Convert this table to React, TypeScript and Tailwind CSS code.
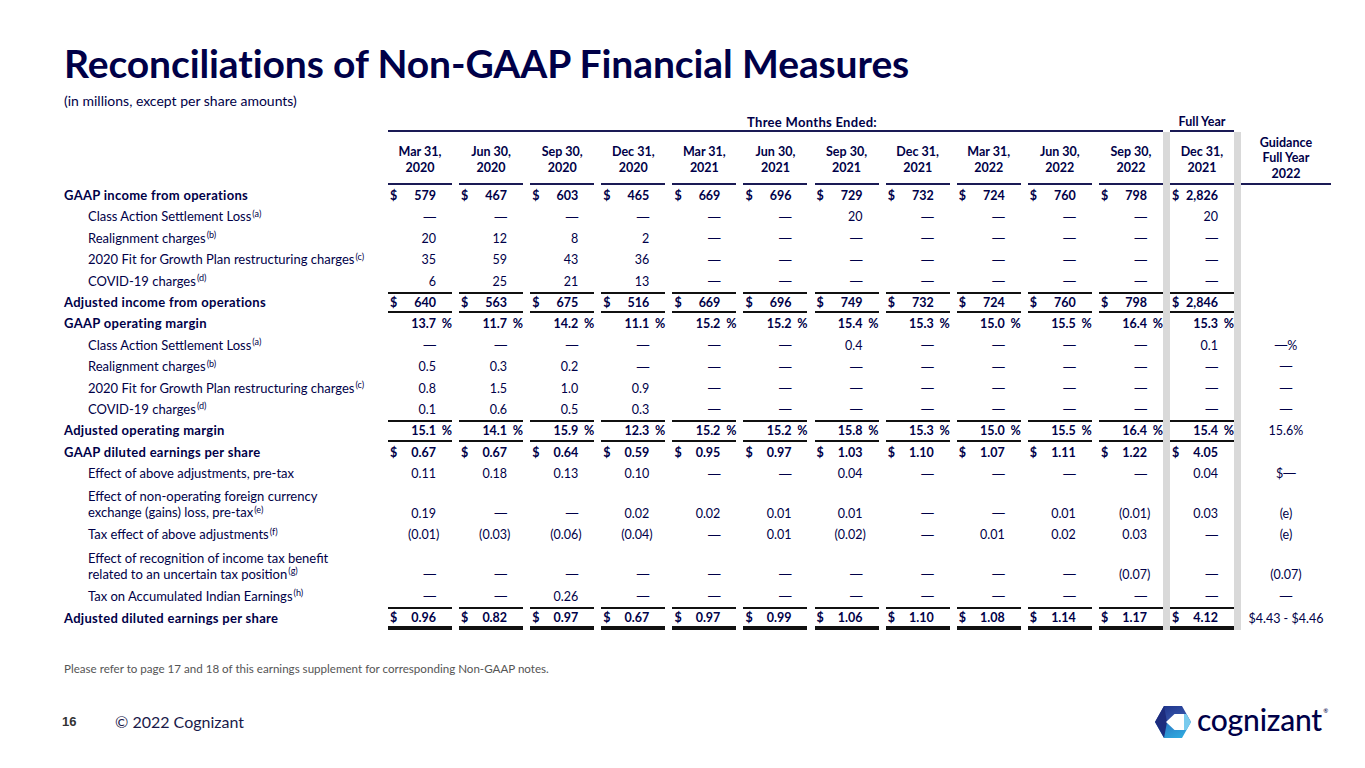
import React from "react";

type Row = {
  label: React.ReactNode;
  bold?: boolean;
  two?: boolean;
  dollar?: boolean;
  pct?: boolean;
  line?: "box" | "double";
  q: string[];
  fy: string;
  g?: string;
};

const D = "—";

const quarters = [
  ["Mar 31,", "2020"],
  ["Jun 30,", "2020"],
  ["Sep 30,", "2020"],
  ["Dec 31,", "2020"],
  ["Mar 31,", "2021"],
  ["Jun 30,", "2021"],
  ["Sep 30,", "2021"],
  ["Dec 31,", "2021"],
  ["Mar 31,", "2022"],
  ["Jun 30,", "2022"],
  ["Sep 30,", "2022"],
];

const Sup = ({ c }: { c: string }) => <sup className="text-[9px] ml-[1px]">({c})</sup>;

const dashes = (n: number) => Array(n).fill(D);

const rows: Row[] = [
  { label: "GAAP income from operations", bold: true, dollar: true, q: ["579", "467", "603", "465", "669", "696", "729", "732", "724", "760", "798"], fy: "2,826" },
  { label: <>Class Action Settlement Loss<Sup c="a" /></>, q: [...dashes(6), "20", ...dashes(4)], fy: "20" },
  { label: <>Realignment charges<Sup c="b" /></>, q: ["20", "12", "8", "2", ...dashes(7)], fy: D },
  { label: <>2020 Fit for Growth Plan restructuring charges<Sup c="c" /></>, q: ["35", "59", "43", "36", ...dashes(7)], fy: D },
  { label: <>COVID-19 charges<Sup c="d" /></>, q: ["6", "25", "21", "13", ...dashes(7)], fy: D },
  { label: "Adjusted income from operations", bold: true, dollar: true, line: "box", q: ["640", "563", "675", "516", "669", "696", "749", "732", "724", "760", "798"], fy: "2,846" },
  { label: "GAAP operating margin", bold: true, pct: true, q: ["13.7", "11.7", "14.2", "11.1", "15.2", "15.2", "15.4", "15.3", "15.0", "15.5", "16.4"], fy: "15.3" },
  { label: <>Class Action Settlement Loss<Sup c="a" /></>, q: [...dashes(6), "0.4", ...dashes(4)], fy: "0.1", g: "—%" },
  { label: <>Realignment charges<Sup c="b" /></>, q: ["0.5", "0.3", "0.2", ...dashes(8)], fy: D, g: D },
  { label: <>2020 Fit for Growth Plan restructuring charges<Sup c="c" /></>, q: ["0.8", "1.5", "1.0", "0.9", ...dashes(7)], fy: D, g: D },
  { label: <>COVID-19 charges<Sup c="d" /></>, q: ["0.1", "0.6", "0.5", "0.3", ...dashes(7)], fy: D, g: D },
  { label: "Adjusted operating margin", bold: true, pct: true, line: "box", q: ["15.1", "14.1", "15.9", "12.3", "15.2", "15.2", "15.8", "15.3", "15.0", "15.5", "16.4"], fy: "15.4", g: "15.6%" },
  { label: "GAAP diluted earnings per share", bold: true, dollar: true, q: ["0.67", "0.67", "0.64", "0.59", "0.95", "0.97", "1.03", "1.10", "1.07", "1.11", "1.22"], fy: "4.05" },
  { label: "Effect of above adjustments, pre-tax", q: ["0.11", "0.18", "0.13", "0.10", D, D, "0.04", D, D, D, D], fy: "0.04", g: "$—" },
  {
    label: <>Effect of non-operating foreign currency<br />exchange (gains) loss, pre-tax<Sup c="e" /></>,
    two: true,
    q: ["0.19", D, D, "0.02", "0.02", "0.01", "0.01", D, D, "0.01", "(0.01)"],
    fy: "0.03",
    g: "(e)",
  },
  { label: <>Tax effect of above adjustments<Sup c="f" /></>, q: ["(0.01)", "(0.03)", "(0.06)", "(0.04)", D, "0.01", "(0.02)", D, "0.01", "0.02", "0.03"], fy: D, g: "(e)" },
  {
    label: <>Effect of recognition of income tax benefit<br />related to an uncertain tax position<Sup c="g" /></>,
    two: true,
    q: [...dashes(10), "(0.07)"],
    fy: D,
    g: "(0.07)",
  },
  { label: <>Tax on Accumulated Indian Earnings<Sup c="h" /></>, q: [D, D, "0.26", ...dashes(8)], fy: D, g: D },
  { label: "Adjusted diluted earnings per share", bold: true, dollar: true, line: "double", q: ["0.96", "0.82", "0.97", "0.67", "0.97", "0.99", "1.06", "1.10", "1.08", "1.14", "1.17"], fy: "4.12", g: "$4.43 - $4.46" },
];

// Lato's em dash is short; the slide's dash is a full em wide
function withDash(s: string) {
  if (!s.includes(D)) return s;
  return s.split(D).map((part, i, arr) => (
    <React.Fragment key={i}>
      {part}
      {i < arr.length - 1 && <span className="font-['Liberation_Sans',sans-serif] font-normal">{D}</span>}
    </React.Fragment>
  ));
}

function Value({ v, r }: { v: string; r: Row }) {
  const neg = v.startsWith("(");
  const body = neg ? v.slice(0, -1) : v;
  const tail = neg ? ")" : r.pct ? "%" : "";
  return (
    <>
      <span className="w-[13px] pl-[2px]">{r.dollar ? "$" : ""}</span>
      <span className="flex-1 text-right whitespace-nowrap">{withDash(body)}</span>
      <span className={`w-[16px] ${neg ? "text-left" : "text-right"}`}>{tail}</span>
    </>
  );
}

function DataRow({ r }: { r: Row }) {
  const h = r.two ? "h-[40px]" : r.line === "double" ? "h-[22.5px]" : "h-[21.4px]";
  const align = r.two ? "items-end" : "items-center";
  const lines =
    r.line === "box"
      ? "border-y-2 border-[#111]"
      : r.line === "double"
      ? "border-t-2 border-b-4 border-b-double border-[#111]"
      : "";
  const cell = `w-[64px] flex ${align} ${lines} ${r.bold ? "font-bold" : ""}`;
  return (
    <div className={`flex ${h} leading-[21.4px]`}>
      <div className={`w-[324px] flex items-center text-[13px] ${r.bold ? "font-bold tracking-[0.3px]" : "pl-6"}`}>
        <div className={r.two ? "leading-[16px]" : ""}>{r.label}</div>
      </div>
      <div className="flex gap-[7.1px]">
        {r.q.map((v, i) => (
          <div key={i} className={cell}>
            <Value v={v} r={r} />
          </div>
        ))}
      </div>
      <div className="w-[7px] bg-[#d9d9d9]" />
      <div className={cell}>
        <Value v={r.fy} r={r} />
      </div>
      <div className="w-[7px] bg-[#d9d9d9]" />
      <div className={`w-[90px] flex ${align} justify-center`}>{withDash(r.g ?? "")}</div>
    </div>
  );
}

function Logo() {
  return (
    <div className="flex items-center gap-[6px]">
      <svg width="36" height="32" viewBox="0 0 36 32">
        <defs>
          <linearGradient id="hexTop" x1="0" y1="0" x2="1" y2="1">
            <stop offset="0" stopColor="#1c2f86" />
            <stop offset="1" stopColor="#3e63b8" />
          </linearGradient>
          <linearGradient id="hexBot" x1="0" y1="0" x2="1" y2="1">
            <stop offset="0" stopColor="#2a6fc0" />
            <stop offset="1" stopColor="#2fb3e3" />
          </linearGradient>
        </defs>
        <polygon points="9,0 27,0 36,16 0,16" fill="url(#hexTop)" />
        <polygon points="0,16 36,16 27,32 9,32" fill="url(#hexBot)" />
        <polygon points="0,16 9,0 12,16 9,32" fill="#1d2c7e" />
        <polygon points="29,8 31.4,8 36,16 31.4,24 29,24" fill="#79cbee" />
        <polygon points="11,16 19.5,8 29,8 29,24 19.5,24" fill="#ffffff" />
      </svg>
      <div className="relative text-[30px] font-medium leading-none tracking-[-0.2px] text-[#000048] -mt-[6px]">
        cognizant
        <span className="absolute -right-[6px] top-[4px] text-[6px]">®</span>
      </div>
    </div>
  );
}

export default function App() {
  return (
    <div className="w-[1365px] h-[768px] bg-white text-[#000048] font-['Lato','Liberation_Sans',sans-serif] overflow-hidden">
      <div className="pl-[64px]">
        <h1 className="pt-[41px] text-[39px] leading-[44px] font-bold tracking-[-0.1px]">
          Reconciliations of Non-GAAP Financial Measures
        </h1>
        <p className="mt-[8px] text-[14px] leading-[16px]">(in millions, except per share amounts)</p>

        <div className="mt-[5px] text-[12.5px]">
          {/* group header */}
          <div className="flex font-bold leading-[16px]">
            <div className="w-[324px]" />
            <div className="w-[775px] border-b-2 border-[#1a1a55] text-right pr-[286px] text-[13px] tracking-[0.3px]">Three Months Ended:</div>
            <div className="w-[7px]" />
            <div className="w-[64px] border-b-2 border-[#1a1a55] text-center">Full Year</div>
          </div>

          {/* column headers */}
          <div className="flex h-[53px]">
            <div className="w-[324px]" />
            <div className="flex gap-[7.1px]">
              {quarters.map(([a, b], i) => (
                <div key={i} className="w-[64px] flex flex-col justify-end items-center font-bold leading-[16px] pb-[7px] border-b-2 border-[#1a1a55]">
                  <span>{a}</span>
                  <span>{b}</span>
                </div>
              ))}
            </div>
            <div className="w-[7px] bg-[#d9d9d9]" />
            <div className="w-[64px] flex flex-col justify-end items-center font-bold leading-[16px] pb-[7px] border-b-2 border-[#1a1a55]">
              <span>Dec 31,</span>
              <span>2021</span>
            </div>
            <div className="w-[7px] bg-[#d9d9d9]" />
            <div className="w-[90px] flex flex-col justify-end items-center font-bold leading-[15.5px] pb-[2px] border-b-2 border-[#1a1a55]">
              <span>Guidance</span>
              <span>Full Year</span>
              <span>2022</span>
            </div>
          </div>

          {rows.map((r, i) => (
            <DataRow key={i} r={r} />
          ))}
        </div>

        <p className="mt-[31px] text-[11.6px] leading-[16px] text-[#555]">
          Please refer to page 17 and 18 of this earnings supplement for corresponding Non-GAAP notes.
        </p>
      </div>

      <div className="mt-[28px] h-[34px] flex items-center pl-[62px] pr-[43px]">
        <span className="w-[53px] font-['Liberation_Sans',sans-serif] font-bold text-[13px] text-[#333]">16</span>
        <span className="text-[16px] text-[#1a1a4a]">© 2022 Cognizant</span>
        <div className="ml-auto">
          <Logo />
        </div>
      </div>
    </div>
  );
}
